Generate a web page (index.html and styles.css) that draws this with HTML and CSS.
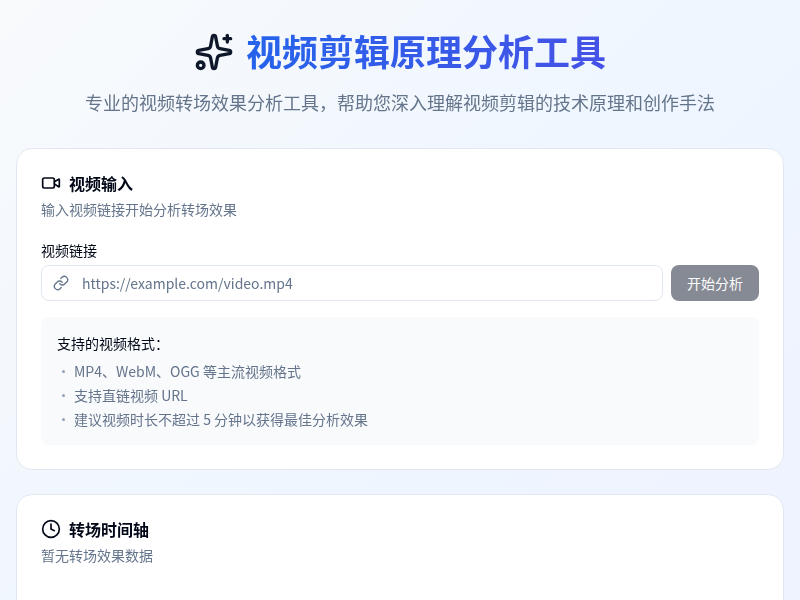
FILE: index.html
```html
<!DOCTYPE html>
<html lang="zh-CN">
<head>
<meta charset="utf-8">
<title>视频剪辑原理分析工具</title>
<link rel="stylesheet" href="styles.css">
</head>
<body>
<main class="page">
  <header class="hero">
    <h1 class="hero-title">
      <svg class="hero-icon" viewBox="0 0 24 24" fill="none" stroke="currentColor" stroke-width="2" stroke-linecap="round" stroke-linejoin="round"><path d="M11.017 2.814a1 1 0 0 1 1.966 0l1.051 5.558a2 2 0 0 0 1.594 1.594l5.558 1.051a1 1 0 0 1 0 1.966l-5.558 1.051a2 2 0 0 0-1.594 1.594l-1.051 5.558a1 1 0 0 1-1.966 0l-1.051-5.558a2 2 0 0 0-1.594-1.594l-5.558-1.051a1 1 0 0 1 0-1.966l5.558-1.051a2 2 0 0 0 1.594-1.594z"/><path d="M20 2v4"/><path d="M22 4h-4"/><circle cx="4" cy="20" r="2"/></svg>
      <span class="hero-text">视频剪辑原理分析工具</span>
    </h1>
    <p class="hero-sub">专业的视频转场效果分析工具，帮助您深入理解视频剪辑的技术原理和创作手法</p>
  </header>

  <section class="card">
    <h2 class="card-title">
      <svg class="card-icon" viewBox="0 0 24 24" fill="none" stroke="currentColor" stroke-width="2" stroke-linecap="round" stroke-linejoin="round"><path d="m16 13 5.223 3.482a.5.5 0 0 0 .777-.416V7.87a.5.5 0 0 0-.752-.432L16 10.5"/><rect x="2" y="6" width="14" height="12" rx="2"/></svg>
      视频输入
    </h2>
    <p class="card-desc">输入视频链接开始分析转场效果</p>
    <label class="field-label" for="url">视频链接</label>
    <div class="field-row">
      <div class="input-wrap">
        <svg class="input-icon" viewBox="0 0 24 24" fill="none" stroke="currentColor" stroke-width="2" stroke-linecap="round" stroke-linejoin="round"><path d="M10 13a5 5 0 0 0 7.54.54l3-3a5 5 0 0 0-7.07-7.07l-1.72 1.71"/><path d="M14 11a5 5 0 0 0-7.54-.54l-3 3a5 5 0 0 0 7.07 7.07l1.71-1.71"/></svg>
        <input class="input" id="url" type="text" placeholder="https://example.com/video.mp4">
      </div>
      <button class="button" type="button" disabled>开始分析</button>
    </div>
    <div class="info">
      <h4 class="info-title">支持的视频格式：</h4>
      <ul class="info-list">
        <li>MP4、WebM、OGG 等主流视频格式</li>
        <li>支持直链视频 URL</li>
        <li>建议视频时长不超过 5 分钟以获得最佳分析效果</li>
      </ul>
    </div>
  </section>

  <section class="card card-timeline">
    <h2 class="card-title">
      <svg class="card-icon" viewBox="0 0 24 24" fill="none" stroke="currentColor" stroke-width="2" stroke-linecap="round" stroke-linejoin="round"><circle cx="12" cy="12" r="10"/><path d="M12 6v6l4 2"/></svg>
      转场时间轴
    </h2>
    <p class="card-desc">暂无转场效果数据</p>
  </section>
</main>
</body>
</html>
```
FILE: styles.css
```css
* { box-sizing: border-box; }
html, body { margin: 0; padding: 0; }
body {
  min-height: 100vh;
  background: linear-gradient(135deg, #f8fafc, #eff6ff 50%, #eef2ff);
  color: #020817;
  font-family: "Noto Sans CJK SC", "Noto Sans", sans-serif;
}
.page {
  display: flex;
  flex-direction: column;
  gap: 24px;
  padding: 24px 16px;
  will-change: opacity;
}
.hero { text-align: center; margin-bottom: 8px; }
.hero-title {
  display: flex;
  align-items: center;
  justify-content: center;
  gap: 12px;
  margin: 0 0 12px;
  font-size: 36px;
  line-height: 52px;
  font-weight: 700;
}
.hero-icon { width: 40px; height: 40px; margin-top: 4px; color: #0f172a; }
.hero-text {
  background: linear-gradient(90deg, #2563eb, #4652e6);
  -webkit-background-clip: text;
  background-clip: text;
  color: transparent;
}
.hero-sub { margin: 0; font-size: 18px; line-height: 28px; color: #64748b; }
.card {
  background: #fff;
  border: 1px solid #e2e8f0;
  border-radius: 16px;
  padding: 24px;
}
.card-timeline { min-height: 200px; }
.card-title {
  display: flex;
  align-items: center;
  gap: 8px;
  margin: 0;
  font-size: 16px;
  line-height: 20px;
  font-weight: 700;
}
.card-icon { width: 20px; height: 20px; }
.card-desc { margin: 6px 0 0; font-size: 14px; line-height: 20px; color: #64748b; }
.field-label {
  display: block;
  margin-top: 21px;
  font-size: 14px;
  line-height: 20px;
}
.field-row { display: flex; gap: 8px; margin-top: 5px; }
.input-wrap { position: relative; flex: 1; }
.input-icon {
  position: absolute;
  left: 12px;
  top: 10px;
  width: 16px;
  height: 16px;
  color: #64748b;
}
.input {
  display: block;
  width: 100%;
  height: 36px;
  padding: 0 12px 0 40px;
  border: 1px solid #e2e8f0;
  border-radius: 8px;
  background: #fff;
  font: inherit;
  font-size: 14px;
  outline: none;
}
.input::placeholder { color: #64748b; opacity: 1; }
.button {
  width: 88px;
  height: 36px;
  border: 0;
  border-radius: 8px;
  background: #0f172a;
  opacity: .5;
  color: #f8fafc;
  font: inherit;
  font-size: 14px;
  font-weight: 400;
}
.info {
  margin-top: 16px;
  padding: 16px;
  border-radius: 8px;
  background: #f8fafc;
}
.info-title { margin: 0 0 8px; font-size: 14px; line-height: 20px; font-weight: 400; }
.info-list {
  display: flex;
  flex-direction: column;
  gap: 4px;
  margin: 0;
  padding: 0;
  list-style: none;
  font-size: 14px;
  line-height: 20px;
  color: #64748b;
}
.info-list li { display: flex; align-items: center; gap: 8px; }
.info-list li::before {
  content: "";
  width: 3px;
  height: 3px;
  margin-left: 5px;
  margin-right: 1px;
  border-radius: 50%;
  background: #94a3b8;
}
```
